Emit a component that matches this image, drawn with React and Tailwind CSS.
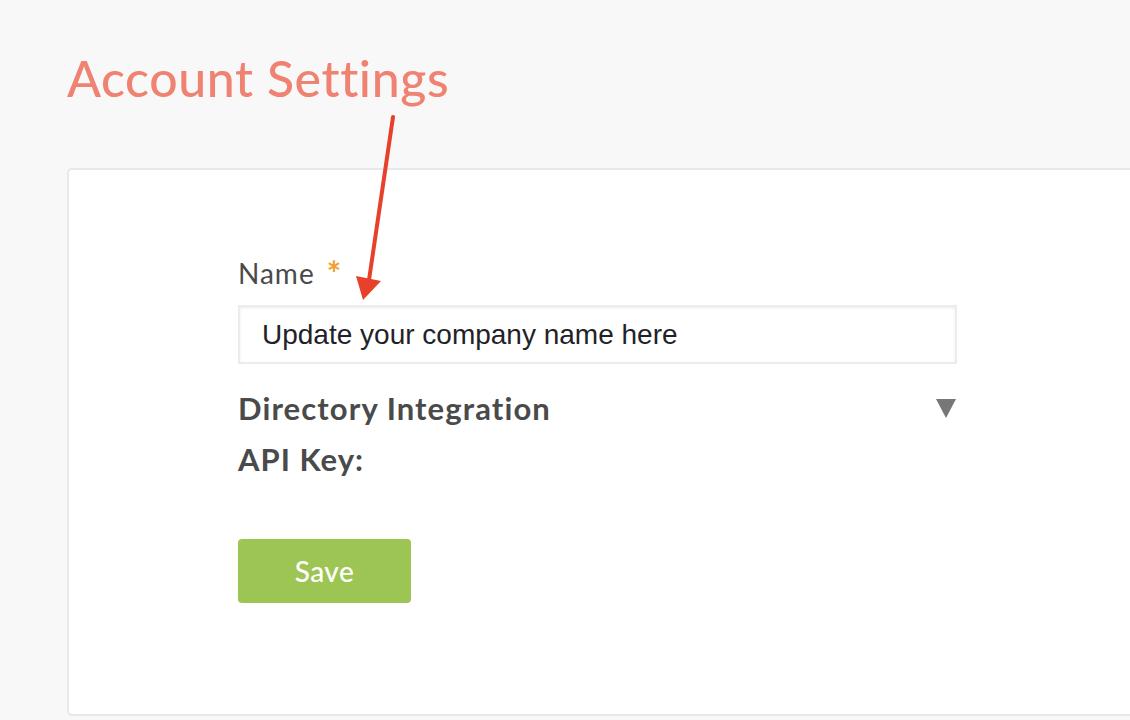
import React from 'react';

const AnnotationArrow = () => (
  <svg
    className="absolute left-0 top-0 pointer-events-none"
    width="1130"
    height="720"
    viewBox="0 0 1130 720"
  >
    <line x1="393" y1="117" x2="369" y2="280" stroke="#e8412b" strokeWidth="4" strokeLinecap="round" />
    <polygon points="356,276 381,281 363,300" fill="#e8412b" />
  </svg>
);

const App = () => {
  return (
    <div className="relative w-[1130px] h-[720px] overflow-hidden bg-[#f8f8f8] font-['Lato',sans-serif]">
      <h1 className="pl-[67px] pt-[49px] text-[50px] leading-[58px] tracking-[0.6px] font-medium text-[#f08272]">
        Account Settings
      </h1>

      <div className="ml-[67px] mt-[61px] w-[1100px] h-[548px] bg-white border-2 border-[#e8e8e8] rounded-[5px]">
        <form className="pl-[169px] pt-[86px] w-[890px]" onSubmit={(e) => e.preventDefault()}>
          <label className="flex items-center gap-[12px] text-[28px] leading-[34px] tracking-[1px] text-[#4a4a4a]">
            <span>Name</span>
            <span className="text-[#f0a030] text-[34px] leading-[34px] font-bold">*</span>
          </label>

          <input
            type="text"
            defaultValue="Update your company name here"
            className="mt-[15px] w-[719px] h-[59px] px-[22px] border-2 border-[#ececec] shadow-[inset_0_1px_3px_rgba(0,0,0,0.08)] outline-none text-[28px] text-[#1f2328] font-['Liberation_Sans',Arial,sans-serif]"
          />

          <div className="mt-[24px] w-[719px] flex items-center justify-between">
            <h3 className="text-[31px] leading-[40px] tracking-[1.1px] font-bold text-[#4a4a4a]">Directory Integration</h3>
            <span className="mr-[1px] w-0 h-0 border-l-[10px] border-r-[10px] border-t-[19px] border-l-transparent border-r-transparent border-t-[#777777]" />
          </div>

          <h3 className="mt-[11px] text-[31px] leading-[40px] tracking-[1px] font-bold text-[#4a4a4a]">API Key:</h3>

          <button
            type="submit"
            className="mt-[60px] w-[173px] h-[64px] bg-[#9dc554] rounded-[4px] text-white text-[28px] tracking-[0.5px] font-medium"
          >
            Save
          </button>
        </form>
      </div>

      <AnnotationArrow />
    </div>
  );
};

export default App;
